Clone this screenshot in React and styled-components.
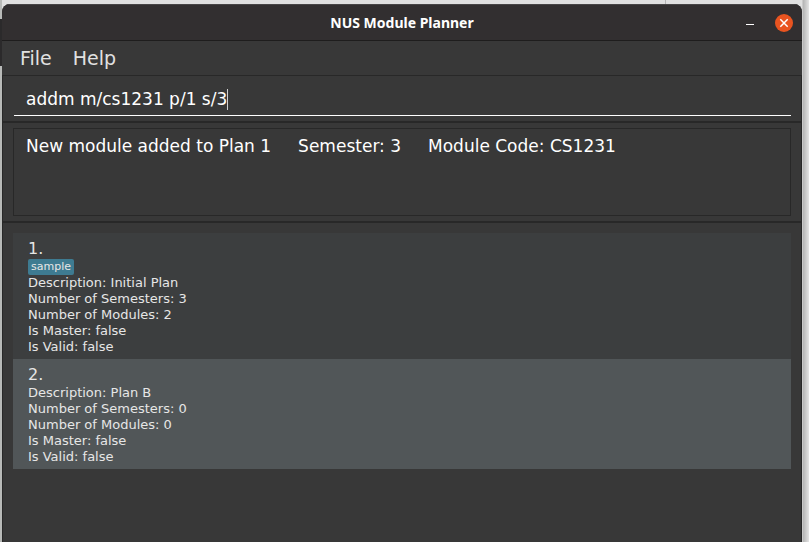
import React, { useState } from "react";
import styled, { createGlobalStyle } from "styled-components";

const GlobalStyle = createGlobalStyle`
  * { box-sizing: border-box; }
  body {
    margin: 0;
    background: #d9d9d9;
    font-family: "DejaVu Sans", sans-serif;
    color: #fff;
  }
  button, input, textarea { font: inherit; color: inherit; }
`;

const Desktop = styled.div`
  position: relative;
  display: flex;
  min-height: 100vh;
  padding: 4px 7px 0 2px;
  background: linear-gradient(to right, #b8bab8 2px, #e0e0e0 2px, #e0e0e0 calc(100% - 7px), #b4b4b4 calc(100% - 6px), #e4e4e4);
`;

const BackgroundWindow = styled.div`
  position: absolute;
  left: 0;
  top: 19px;
  width: 2px;
  height: 47px;
  background: #2b2a2b;
`;

const BackgroundDivider = styled.div`
  position: absolute;
  left: 665px;
  top: 0;
  width: 1px;
  height: 4px;
  background: #b5b5b5;
`;

const Window = styled.main`
  position: relative;
  flex: 1;
  min-width: 0;
  display: flex;
  flex-direction: column;
  background: #383838;
  border-radius: 8px 8px 0 0;
  overflow: hidden;
`;

const TitleBar = styled.header`
  display: grid;
  grid-template-columns: 1fr auto 1fr;
  align-items: center;
  height: 37px;
  padding: 0 9px;
  background: #322f30;
  border-top: 1px solid #474546;
  border-bottom: 1px solid #1e1d1d;
`;

const Title = styled.h1`
  grid-column: 2;
  margin: 0;
  font: 700 14px/20px "Noto Sans", sans-serif;
`;

const WindowControls = styled.div`
  display: flex;
  justify-content: flex-end;
  align-items: center;
  gap: 16px;
`;

const ControlButton = styled.button`
  display: flex;
  width: 18px;
  height: 18px;
  padding: 0;
  border: 0;
  border-radius: 50%;
  background: ${({ $accent }) => ($accent ? "#e95420" : "transparent")};
`;

const MenuBar = styled.nav`
  display: flex;
  gap: 21px;
  height: 35px;
  padding: 0 18px;
  border-bottom: 1px solid #282828;
`;

const MenuButton = styled.button`
  padding: 0;
  border: 0;
  background: none;
  color: #e1e1e1;
  font-size: 19px;
  line-height: 34px;
`;

const Body = styled.div`
  flex: 1;
  display: flex;
  flex-direction: column;
  border: solid #282828;
  border-width: 0 1px;
`;

const CommandPane = styled.form`
  padding: 7px 10px 5px 11px;
  border-bottom: 2px solid #282828;
`;

const CommandField = styled.label`
  display: flex;
  align-items: center;
  height: 33px;
  padding: 0 12px;
  border-bottom: 1px solid #fff;
`;

const CommandInput = styled.input`
  field-sizing: content;
  min-width: 1px;
  height: 21px;
  padding: 0;
  border: 0;
  border-right: 1px solid #d0d0d0;
  outline: 0;
  background: none;
  caret-color: transparent;
  font-size: 17px;
`;

const ResultPane = styled.section`
  padding: 5px 10px;
  border-bottom: 2px solid #282828;
`;

const ResultBox = styled.textarea`
  display: block;
  width: 100%;
  height: 88px;
  padding: 7px 12px;
  border: 1px solid #282828;
  outline: 0;
  resize: none;
  overflow: hidden;
  background: none;
  font-size: 17px;
  line-height: 20px;
`;

const PlanList = styled.ul`
  margin: 0;
  padding: 10px;
  list-style: none;
`;

const PlanRow = styled.li`
  padding: 6px 15px 4px;
  background: ${({ $alternate }) => ($alternate ? "#515658" : "#3c3e3f")};
  color: #e6e6e6;
  font-size: 13px;
  line-height: 16px;
`;

const PlanNumber = styled.h2`
  margin: 0;
  font-size: 16px;
  font-weight: 400;
  line-height: 20px;
`;

const Tags = styled.div`
  display: flex;
  gap: 7px;
`;

const Tag = styled.span`
  padding: 0 3px;
  border-radius: 2px;
  background: #3e7b91;
  font-size: 11px;
`;

const Detail = styled.p`
  margin: 0;
`;

const plans = [
  { id: 1, tags: ["sample"], description: "Initial Plan", semesters: 3, modules: 2, master: false, valid: false },
  { id: 2, tags: [], description: "Plan B", semesters: 0, modules: 0, master: false, valid: false },
];

export default function App() {
  const [command, setCommand] = useState("addm m/cs1231 p/1 s/3");

  return (
    <Desktop>
      <GlobalStyle />
      <BackgroundWindow />
      <BackgroundDivider />
      <Window>
        <TitleBar>
          <Title>NUS Module Planner</Title>
          <WindowControls>
            <ControlButton type="button" aria-label="Minimize">
              <svg width="18" height="18" viewBox="0 0 18 18" aria-hidden="true">
                <path d="M5 10h8v1H5z" fill="#fff" />
              </svg>
            </ControlButton>
            <ControlButton type="button" aria-label="Close" $accent>
              <svg width="18" height="18" viewBox="0 0 18 18" aria-hidden="true">
                <path d="M5.3 5.3l7.4 7.4M12.7 5.3l-7.4 7.4" stroke="#fff" strokeWidth="1.5" />
              </svg>
            </ControlButton>
          </WindowControls>
        </TitleBar>
        <MenuBar>
          <MenuButton type="button">File</MenuButton>
          <MenuButton type="button">Help</MenuButton>
        </MenuBar>
        <Body>
          <CommandPane onSubmit={(event) => event.preventDefault()}>
            <CommandField>
              <CommandInput
                type="text"
                aria-label="Command"
                spellCheck={false}
                value={command}
                onChange={(event) => setCommand(event.target.value)}
              />
            </CommandField>
          </CommandPane>
          <ResultPane>
            <ResultBox
              aria-label="Result"
              readOnly
              spellCheck={false}
              value="New module added to Plan 1     Semester: 3     Module Code: CS1231"
            />
          </ResultPane>
          <PlanList>
            {plans.map((plan, index) => (
              <PlanRow key={plan.id} $alternate={index % 2 === 1}>
                <PlanNumber>{`${plan.id}.`}</PlanNumber>
                <Tags>
                  {plan.tags.map((tag) => (
                    <Tag key={tag}>{tag}</Tag>
                  ))}
                </Tags>
                <Detail>{`Description: ${plan.description}`}</Detail>
                <Detail>{`Number of Semesters: ${plan.semesters}`}</Detail>
                <Detail>{`Number of Modules: ${plan.modules}`}</Detail>
                <Detail>{`Is Master: ${plan.master}`}</Detail>
                <Detail>{`Is Valid: ${plan.valid}`}</Detail>
              </PlanRow>
            ))}
          </PlanList>
        </Body>
      </Window>
    </Desktop>
  );
}
